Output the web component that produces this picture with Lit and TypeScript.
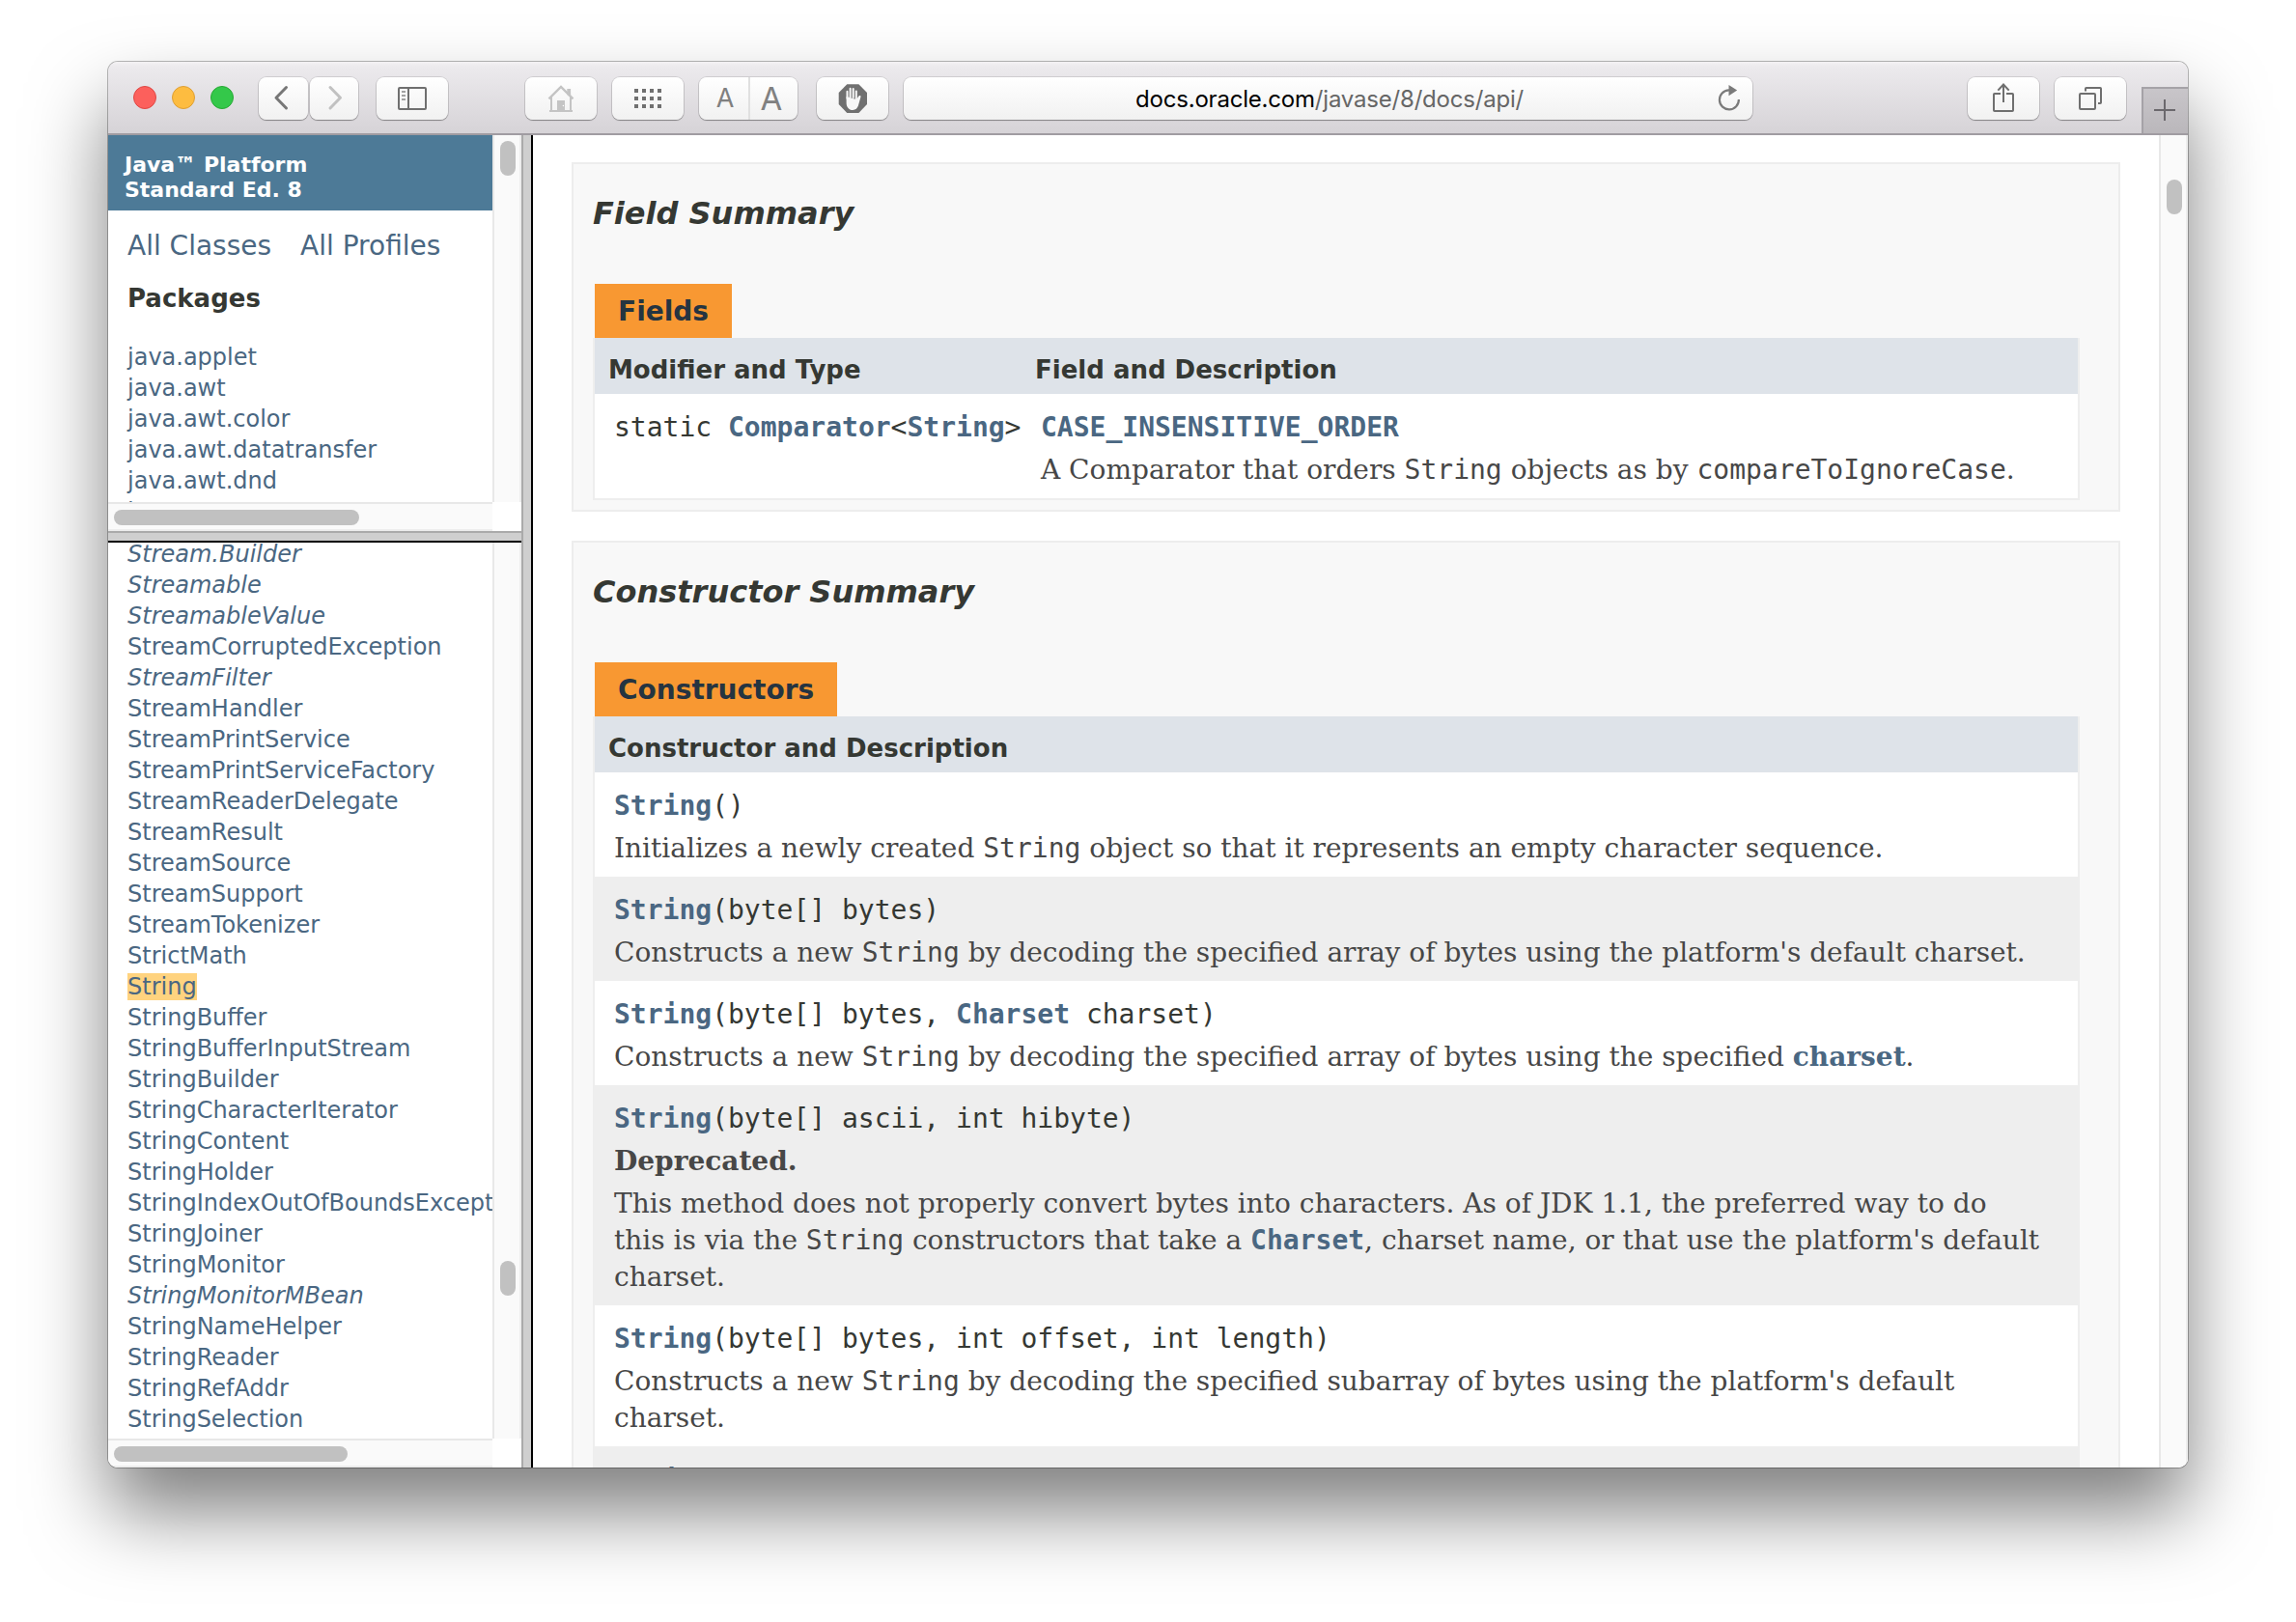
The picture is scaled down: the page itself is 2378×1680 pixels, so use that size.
import { LitElement, html, css, svg, TemplateResult } from "lit";
import { customElement, property } from "lit/decorators.js";
import { classMap } from "lit/directives/class-map.js";

type Inline = TemplateResult | string;

interface Row {
  signature: Inline;
  lines: Inline[];
  deprecated?: boolean;
}

const PACKAGES = ["java.applet", "java.awt", "java.awt.color", "java.awt.datatransfer", "java.awt.dnd", "java.awt.event"];

// A leading asterisk marks an interface, which is listed in italics.
const CLASSES = [
  "*Stream.Builder", "*Streamable", "*StreamableValue", "StreamCorruptedException", "*StreamFilter",
  "StreamHandler", "StreamPrintService", "StreamPrintServiceFactory", "StreamReaderDelegate", "StreamResult",
  "StreamSource", "StreamSupport", "StreamTokenizer", "StrictMath", "String", "StringBuffer",
  "StringBufferInputStream", "StringBuilder", "StringCharacterIterator", "StringContent", "StringHolder",
  "StringIndexOutOfBoundsException", "StringJoiner", "StringMonitor", "*StringMonitorMBean",
  "StringNameHelper", "StringReader", "StringRefAddr", "StringSelection",
];

const link = (t: string) => html`<a>${t}</a>`;
const code = (t: Inline) => html`<code>${t}</code>`;

const CONSTRUCTORS: Row[] = [
  {
    signature: html`${link("String")}()`,
    lines: [html`Initializes a newly created ${code("String")} object so that it represents an empty character sequence.`],
  },
  {
    signature: html`${link("String")}(byte[] bytes)`,
    lines: [html`Constructs a new ${code("String")} by decoding the specified array of bytes using the platform's default charset.`],
  },
  {
    signature: html`${link("String")}(byte[] bytes, ${link("Charset")} charset)`,
    lines: [html`Constructs a new ${code("String")} by decoding the specified array of bytes using the specified ${link("charset")}.`],
  },
  {
    signature: html`${link("String")}(byte[] ascii, int hibyte)`,
    deprecated: true,
    lines: [
      "This method does not properly convert bytes into characters. As of JDK 1.1, the preferred way to do",
      html`this is via the ${code("String")} constructors that take a ${code(link("Charset"))}, charset name, or that use the platform's default`,
      "charset.",
    ],
  },
  {
    signature: html`${link("String")}(byte[] bytes, int offset, int length)`,
    lines: [html`Constructs a new ${code("String")} by decoding the specified subarray of bytes using the platform's default`, "charset."],
  },
  { signature: link("String"), lines: [] },
];

const ICONS: Record<string, TemplateResult> = {
  back: svg`<path d="M28.5 10.5 18 21.2 28.5 32" stroke="#777" stroke-width="3" stroke-linecap="round" stroke-linejoin="round"/>`,
  forward: svg`<path d="M21 10.5 31.5 21.2 21 32" stroke="#c1c1c1" stroke-width="3" stroke-linecap="round" stroke-linejoin="round"/>`,
  sidebar: svg`<rect x="23" y="11" width="28" height="22" rx="1" stroke="#6f6f6f" stroke-width="2"/>
    <path d="M33 11v22" stroke="#6f6f6f" stroke-width="2"/>
    <path d="M26 15h4M26 19h4M26 23h4" stroke="#a2a2a2" stroke-width="2"/>`,
  home: svg`<path d="M43.3 18v-6h3.8v9z" fill="#c4c4c4"/>
    <path d="M24.5 22.3 37 10l12.5 12.3" stroke="#c4c4c4" stroke-width="2.4"/>
    <path d="M27 20v14M47 20v14" stroke="#c4c4c4" stroke-width="2"/>
    <path d="M25 35h24" stroke="#c4c4c4" stroke-width="2"/>
    <path d="M33 24h8v11h-8z" fill="#c4c4c4"/><circle cx="39.4" cy="29.5" r=".7" fill="#fff"/>`,
  grid: svg`${[12, 20, 28].map((y) => [23, 31, 39, 47].map((x) => svg`<rect x=${x} y=${y} width="4" height="4" fill="#707070"/>`))}`,
  block: svg`<path d="M31.3 7.200h12.100L52 15.900V28L43.400 37H31.300L22.700 28V15.900z" fill="#707070"/>
    <path d="M30.600 20v6.200c0 4.600 2.500 7.800 6.600 7.800 3.100 0 4.700-1.700 5.700-4.400l2.600-9.300c.3-1.300-1.500-1.800-2.200-.6L41 23z" fill="#f8f8f8"/>
    <path d="M31.500 22v-7.300M34.600 21v-9.200M37.700 21v-9M40.800 24v-9.500" stroke="#f8f8f8" stroke-width="2" stroke-linecap="round"/>`,
  share: svg`<path d="M34 17h-6.200a.8.8 0 0 0-.8.8v16.400c0 .5.300.8.8.8h18.400c.500 0 .8-.3.8-.8V17.800a.8.8 0 0 0-.8-.8H40" stroke="#6f6f6f" stroke-width="2"/>
    <path d="M37 7.500V26M31.300 13.600 37 7.500l5.700 6.100" stroke="#6f6f6f" stroke-width="2"/>`,
  tabs: svg`<rect x="26" y="17" width="16" height="16" rx="1" stroke="#6f6f6f" stroke-width="2"/>
    <path d="M32 14.500V11.800c0-.5.300-.8.800-.8h14.400c.500 0 .8.300.8.800v14.400c0 .5-.3.800-.8.800H45" stroke="#6f6f6f" stroke-width="2"/>`,
};

@customElement("tool-button")
class ToolButton extends LitElement {
  @property() icon = "";
  @property({ type: Number }) width = 74;
  static styles = css`
    :host {
      display: block;
      height: 44px;
      border-radius: 8px;
      background: linear-gradient(#fff, #f1f1f1);
      box-shadow: 0 0 0 1px rgba(0, 0, 0, 0.11), 0 1px 1px rgba(0, 0, 0, 0.32);
    }
    svg { display: block; fill: none; }
  `;
  render() {
    return html`<svg width=${this.width} height="44" viewBox="0 0 ${this.width} 44">${ICONS[this.icon]}</svg>`;
  }
}

@customElement("browser-toolbar")
class BrowserToolbar extends LitElement {
  static styles = css`
    :host {
      display: flex;
      box-sizing: border-box;
      height: 76px;
      padding: 16px 0 0 26px;
      align-items: flex-start;
      border-bottom: 2px solid #a09ca2;
      background: linear-gradient(#f4f2f4, #eceaed 5px, #d6d3d7);
      font-family: Inter, "Liberation Sans", sans-serif;
    }
    .lights { display: flex; gap: 16px; padding-top: 9px; }
    .light { box-sizing: border-box; width: 24px; height: 24px; border-radius: 50%; border: 1px solid; }
    .red { background: #fc605c; border-color: #df4744; }
    .amber { background: #fdbc40; border-color: #de9f34; }
    .green { background: #34c84a; border-color: #27a934; }
    .nav { display: flex; gap: 2px; margin-left: 26px; }
    .side { margin-left: 19px; }
    .home { margin-left: 80px; }
    .grid, .url { margin-left: 16px; }
    .sizes, .url {
      box-sizing: border-box;
      height: 44px;
      display: flex;
      border-radius: 8px;
      background: linear-gradient(#fff, #f1f1f1);
      box-shadow: 0 0 0 1px rgba(0, 0, 0, 0.11), 0 1px 1px rgba(0, 0, 0, 0.32);
    }
    .sizes { width: 102px; margin-left: 16px; color: #808080; }
    .small, .large { box-sizing: border-box; text-align: center; line-height: 44px; font-weight: 400; }
    .small { width: 53px; font-size: 27px; border-right: 2px solid #e0e0e0; padding-left: 3px; }
    .large { width: 49px; font-size: 33px; padding-right: 5px; }
    .block { margin-left: 20px; }
    .url { width: 879px; align-items: center; padding: 0 12px 0 240px; }
    .address { flex: 1; font-size: 24px; padding-top: 2px; line-height: 42px; color: #666; white-space: nowrap; letter-spacing: -0.2px; }
    .host { color: #000; }
    .reload { display: block; fill: none; }
    .share { margin-left: 223px; }
    .tabs { margin-left: 16px; }
    .plus {
      box-sizing: border-box;
      width: 48px;
      height: 48px;
      margin: 10px 0 0 auto;
      background: linear-gradient(#c8c5c9, #bab7bb);
      border: solid #a5a2a7;
      border-width: 2px 0 0 2px;
    }
    .plus svg { display: block; }
  `;
  render() {
    return html`
      <div class="lights">
        <div class="light red"></div><div class="light amber"></div><div class="light green"></div>
      </div>
      <div class="nav">
        <tool-button icon="back" width="51"></tool-button>
        <tool-button icon="forward" width="50"></tool-button>
      </div>
      <tool-button class="side" icon="sidebar"></tool-button>
      <tool-button class="home" icon="home"></tool-button>
      <tool-button class="grid" icon="grid"></tool-button>
      <div class="sizes"><div class="small">A</div><div class="large">A</div></div>
      <tool-button class="block" icon="block"></tool-button>
      <div class="url">
        <div class="address"><span class="host">docs.oracle.com</span>/javase/8/docs/api/</div>
        <svg class="reload" width="26" height="44" viewBox="0 0 26 44">
          <path d="M14 13.300h-.4a10 10 0 1 0 10.300 9.700" stroke="#7a7a7a" stroke-width="2.200" />
          <path d="M13.500 8v11.300l8.700-5.700z" fill="#7a7a7a" />
        </svg>
      </div>
      <tool-button class="share" icon="share"></tool-button>
      <tool-button class="tabs" icon="tabs"></tool-button>
      <div class="plus">
        <svg width="46" height="46" viewBox="0 0 46 46"><path d="M22 11v22M11 22h22" stroke="#6b686d" stroke-width="2" /></svg>
      </div>
    `;
  }
}

/** A frame with permanent scroll bars; the content is clipped to the viewport. */
@customElement("scroll-frame")
class ScrollFrame extends LitElement {
  @property({ type: Number }) top = 0;
  @property({ type: Number }) size = 36;
  @property({ type: Number }) across = 0;
  static styles = css`
    :host { display: grid; grid-template-columns: minmax(0, 1fr) 30px; grid-template-rows: minmax(0, 1fr) auto; background: #fff; min-height: 0; min-width: 0; }
    .view { overflow: hidden; }
    .v { box-sizing: border-box; background: #fafafa; border: solid #e8e8e8; border-width: 0 2px; border-right-color: #ededed; padding-left: 6px; }
    .h { box-sizing: border-box; height: 30px; background: #fafafa; border: solid #e8e8e8; border-width: 2px 0; border-bottom-color: #ededed; padding: 6px 0 0 6px; }
    .thumb { width: 16px; height: 16px; border-radius: 8px; background: #c1c1c1; }
  `;
  render() {
    return html`
      <div class="view"><slot></slot></div>
      <div class="v" style="padding-top:${this.top}px"><div class="thumb" style="height:${this.size}px"></div></div>
      ${this.across ? html`<div class="h"><div class="thumb" style="width:${this.across}px"></div></div>` : ""}
    `;
  }
}

@customElement("package-list")
class PackageList extends LitElement {
  static styles = css`
    :host { display: block; font-family: "DejaVu Sans", sans-serif; color: #4a6782; white-space: nowrap; }
    .bar { box-sizing: border-box; height: 78px; padding: 18px 0 0 17px; background: #4d7a97; color: #fff; font-weight: bold; font-size: 22px; line-height: 26px; }
    .top { display: flex; gap: 30px; padding: 20px 0 0 20px; font-size: 28px; line-height: 34px; }
    .title { padding: 20px 0 0 20px; font-weight: bold; font-size: 26px; line-height: 34px; color: #353833; }
    .list { padding: 28px 0 0 20px; font-size: 24px; line-height: 32px; }
  `;
  render() {
    return html`
      <div class="bar"><div>Java™ Platform</div><div>Standard Ed. 8</div></div>
      <div class="top"><a>All Classes</a><a>All Profiles</a></div>
      <div class="title">Packages</div>
      <div class="list">${PACKAGES.map((p) => html`<div>${p}</div>`)}</div>
    `;
  }
}

@customElement("class-list")
class ClassList extends LitElement {
  static styles = css`
    :host { display: block; padding: 0 0 0 20px; margin-top: -4px; font: 24px/32px "DejaVu Sans", sans-serif; color: #4a6782; white-space: nowrap; }
    .interface { font-style: italic; }
    .found { background: #ffd37f; }
    .item { height: 32px; }
  `;
  render() {
    return CLASSES.map((c) => {
      const name = c.replace("*", "");
      return html`<div class=${classMap({ item: true, interface: c !== name })}>
        <span class=${classMap({ found: name === "String" })}>${name}</span>
      </div>`;
    });
  }
}

@customElement("class-summary")
class ClassSummary extends LitElement {
  static styles = css`
    :host { display: flex; flex-direction: column; gap: 30px; padding: 28px 40px 0; font-family: "DejaVu Sans", sans-serif; color: #353833; white-space: nowrap; }
    .panel { box-sizing: border-box; border: 2px solid #ededed; background: #f8f8f8; padding: 32px 40px 10px 20px; flex: none; }
    .panel.open { min-height: 1000px; }
    .heading { font-weight: bold; font-style: italic; font-size: 32px; line-height: 38px; margin-bottom: 54px; }
    .tab { display: block; width: max-content; margin-left: 2px; padding: 1px 24px 0; background: #f89832; color: #253441; font-weight: bold; font-size: 28px; line-height: 55px; }
    .table { border: solid #eee; border-width: 0 2px 2px; }
    .head { display: flex; height: 58px; padding-left: 14px; background: #dee3e9; font-weight: bold; font-size: 26px; line-height: 66px; }
    .type { width: 442px; flex: none; }
    .row { display: flex; padding: 16px 0 10px 20px; background: #fff; }
    .row.alt { background: #eee; }
    .sig, code { font-family: "DejaVu Sans Mono", monospace; }
    .sig { font-size: 28px; line-height: 38px; white-space: pre; }
    .block { padding-top: 6px; font-family: "DejaVu Serif", serif; font-size: 28px; line-height: 38px; color: #474747; }
    code { font-size: 28px; line-height: 1; }
    .line { height: 38px; }
    .deprecated { font-weight: bold; }
    a { color: #4a6782; font-weight: bold; }
  `;
  private row(r: Row, i: number) {
    return html`<div class=${classMap({ row: true, alt: i % 2 === 1 })}>
      <div>
        <div class="sig">${r.signature}</div>
        ${r.deprecated ? html`<div class="block deprecated">Deprecated.</div>` : ""}
        <div class="block">${r.lines.map((l) => html`<div class="line">${l}</div>`)}</div>
      </div>
    </div>`;
  }
  render() {
    return html`
      <section class="panel">
        <div class="heading">Field Summary</div>
        <div class="tab">Fields</div>
        <div class="table">
          <div class="head"><div class="type">Modifier and Type</div><div>Field and Description</div></div>
          <div class="row">
            <div class="type sig">static ${link("Comparator")}&lt;${link("String")}&gt;</div>
            <div>
              <div class="sig">${link("CASE_INSENSITIVE_ORDER")}</div>
              <div class="block"><div class="line">A Comparator that orders ${code("String")} objects as by ${code("compareToIgnoreCase")}.</div></div>
            </div>
          </div>
        </div>
      </section>
      <section class="panel open">
        <div class="heading">Constructor Summary</div>
        <div class="tab">Constructors</div>
        <div class="table">
          <div class="head">Constructor and Description</div>
          ${CONSTRUCTORS.map((r, i) => this.row(r, i))}
        </div>
      </section>
    `;
  }
}

@customElement("app-root")
class AppRoot extends LitElement {
  static styles = css`
    :host { display: block; box-sizing: border-box; width: 2378px; height: 1680px; padding: 64px 112px 160px; overflow: hidden; background: #fff; }
    .window {
      display: flex;
      flex-direction: column;
      height: 1456px;
      border-radius: 10px;
      box-shadow: 0 0 0 1px rgba(0, 0, 0, 0.27), 0 46px 80px rgba(0, 0, 0, 0.5);
    }
    .clip { display: flex; flex-direction: column; flex: 1; min-height: 0; border-radius: 10px; overflow: hidden; }
    .frames { flex: 1; min-height: 0; display: grid; grid-template-columns: 428px 12px minmax(0, 1fr); }
    .left { display: grid; grid-template-rows: 410px 12px minmax(0, 1fr); min-height: 0; }
    .split { box-sizing: border-box; background: #cfcfcf; border: solid #aaa; border-width: 0 0 0 2px; border-right: 2px solid #000; }
    .split.flat { border: solid #aaa; border-width: 2px 0; border-bottom-color: #000; }
  `;
  render() {
    return html`
      <div class="window">
        <div class="clip">
          <browser-toolbar></browser-toolbar>
          <div class="frames">
            <div class="left">
              <scroll-frame top="6" size="36" across="254"><package-list></package-list></scroll-frame>
              <div class="split flat"></div>
              <scroll-frame top="744" size="36" across="242"><class-list></class-list></scroll-frame>
            </div>
            <div class="split"></div>
            <scroll-frame top="46" size="36"><class-summary></class-summary></scroll-frame>
          </div>
        </div>
      </div>
    `;
  }
}
